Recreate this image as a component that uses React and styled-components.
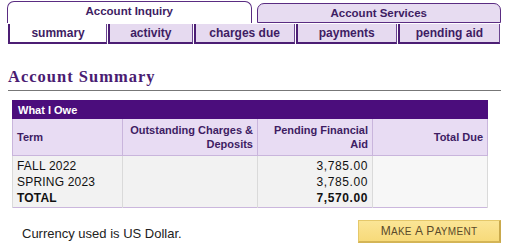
import React from 'react';
import styled, { createGlobalStyle } from 'styled-components';

const GlobalStyle = createGlobalStyle`
	body {
		margin: 0;
		background: #fff;
		font-family: 'Liberation Sans', Arial, sans-serif;
	}
`;

const mainTabs = [
	{ label: 'Account Inquiry', active: true },
	{ label: 'Account Services', active: false },
];

const subTabs = [
	{ label: 'summary', width: 100, active: true },
	{ label: 'activity', width: 85 },
	{ label: 'charges due', width: 102 },
	{ label: 'payments', width: 102 },
	{ label: 'pending aid', width: 103 },
];

const rows = [
	{ term: 'FALL 2022', aid: '3,785.00' },
	{ term: 'SPRING 2023', aid: '3,785.00' },
	{ term: 'TOTAL', aid: '7,570.00', total: true },
];

const colWidths = [110, 135, 115, 115];

const App = () => {
	return (
		<Page>
			<GlobalStyle />
			<TabRow>
				{mainTabs.map((t) => (
					<MainTab key={t.label} $active={t.active}>
						{t.label}
					</MainTab>
				))}
			</TabRow>
			<SubTabRow>
				{subTabs.map((t) => (
					<SubTab key={t.label} $active={t.active} $width={t.width}>
						{t.label}
					</SubTab>
				))}
			</SubTabRow>

			<Heading>Account Summary</Heading>

			<Table>
				<colgroup>
					{colWidths.map((w, i) => (
						<col key={i} width={w} />
					))}
				</colgroup>
				<thead>
					<tr>
						<Caption colSpan={4}>What I Owe</Caption>
					</tr>
					<tr>
						<Th $align='left'>Term</Th>
						<Th>Outstanding Charges &amp; Deposits</Th>
						<Th>Pending Financial Aid</Th>
						<Th>Total Due</Th>
					</tr>
				</thead>
				<tbody>
					{rows.map((r, i) => {
						const first = i === 0;
						const last = i === rows.length - 1;
						return (
							<tr key={r.term}>
								<Td $bold={r.total} $first={first} $last={last}>
									{r.term}
								</Td>
								<Td $first={first} $last={last} />
								<Td $align='right' $bold={r.total} $first={first} $last={last}>
									{r.aid}
								</Td>
								<Td $light $first={first} $last={last} />
							</tr>
						);
					})}
				</tbody>
			</Table>

			<Footer>
				<Note>Currency used is US Dollar.</Note>
				<PayButton>
					<Cap>M</Cap>ake <Cap>A</Cap> <Cap>P</Cap>ayment
				</PayButton>
			</Footer>
		</Page>
	);
};

export default App;

const Page = styled.div`
	width: 506px;
	height: 243px;
	padding: 1px 5px 0 7px;
	box-sizing: border-box;
	overflow: hidden;
`;

const TabRow = styled.div`
	display: flex;
	gap: 5px;
`;

const MainTab = styled.div`
	flex: 1;
	height: ${(p) => (p.$active ? '22px' : '20px')};
	margin-top: ${(p) => (p.$active ? '0' : '2px')};
	box-sizing: border-box;
	border: 1px solid #5a2c82;
	border-bottom: ${(p) => (p.$active ? 'none' : '1px solid #5a2c82')};
	border-radius: 7px 7px 0 0;
	background: ${(p) => (p.$active ? '#fff' : '#e7dcf1')};
	color: #3e1d63;
	font-size: 11.5px;
	font-weight: bold;
	text-align: center;
	line-height: 19px;
`;

const SubTabRow = styled.div`
	display: flex;
	margin-top: 1px;
	padding-left: 1px;
`;

const SubTab = styled.div`
	width: ${(p) => p.$width}px;
	height: 20px;
	box-sizing: border-box;
	border-left: 2px solid #4c1e74;
	border-right: 1px solid #6a4490;
	border-bottom: 2px solid #4c1e74;
	margin-right: 1px;
	background: ${(p) => (p.$active ? '#fff' : '#e6daf0')};
	color: #3e1d63;
	font-size: 12px;
	font-weight: bold;
	text-align: center;
	line-height: 18px;
`;

const Heading = styled.h2`
	margin: 22px 0 0 1px;
	padding-bottom: 3px;
	border-bottom: 1px solid #777;
	font-family: 'Liberation Serif', 'Times New Roman', serif;
	font-size: 16.5px;
	font-weight: bold;
	letter-spacing: 1px;
	color: #4a1c72;
	line-height: 21px;
`;

const Table = styled.table`
	margin: 9px 0 0 5px;
	width: 475px;
	table-layout: fixed;
	border-collapse: collapse;
	border: 1px solid #cbb7dd;
	font-size: 12px;
`;

const Caption = styled.th`
	background: #4b0d7c;
	color: #fff;
	text-align: left;
	font-size: 11px;
	height: 17px;
	padding: 0 5px;
	border: 1px solid #4b0d7c;
`;

const Th = styled.th`
	height: 36px;
	padding: 0 4px;
	background: #e8dcf3;
	color: #3e1d63;
	border: 1px solid #c9b5dc;
	text-align: ${(p) => p.$align || 'right'};
	font-size: 11px;
	font-weight: bold;
	line-height: 14px;
	vertical-align: middle;
`;

const Td = styled.td`
	height: 16px;
	padding: ${(p) => (p.$first ? '2px' : '0')} 4px ${(p) => (p.$last ? '1px' : '0')};
	background: ${(p) => (p.$light ? '#f7f7f7' : '#f2f2f2')};
	border-left: 1px solid #dadada;
	border-right: 1px solid #dadada;
	color: #111;
	text-align: ${(p) => p.$align || 'left'};
	font-size: 12px;
	letter-spacing: ${(p) => (p.$align === 'right' ? '0.6px' : '0.2px')};
	font-weight: ${(p) => (p.$bold ? 'bold' : 'normal')};
	line-height: 16px;
`;

const Footer = styled.div`
	display: flex;
	justify-content: space-between;
	align-items: center;
	margin-top: 12px;
	padding-left: 15px;
`;

const Note = styled.span`
	font-size: 13px;
	color: #222;
	padding-top: 3px;
`;

const PayButton = styled.button`
	width: 143px;
	height: 23px;
	padding: 0;
	background: linear-gradient(#fbe596, #f7da7a);
	border: 1px solid #e5c86a;
	border-right: 2px solid #c9a94c;
	border-bottom: 2px solid #d4b556;
	color: #5a4a2a;
	font-family: 'Liberation Sans', Arial, sans-serif;
	font-size: 10px;
	text-transform: uppercase;
	letter-spacing: 0.3px;
	cursor: pointer;
`;

const Cap = styled.span`
	font-size: 12px;
`;
